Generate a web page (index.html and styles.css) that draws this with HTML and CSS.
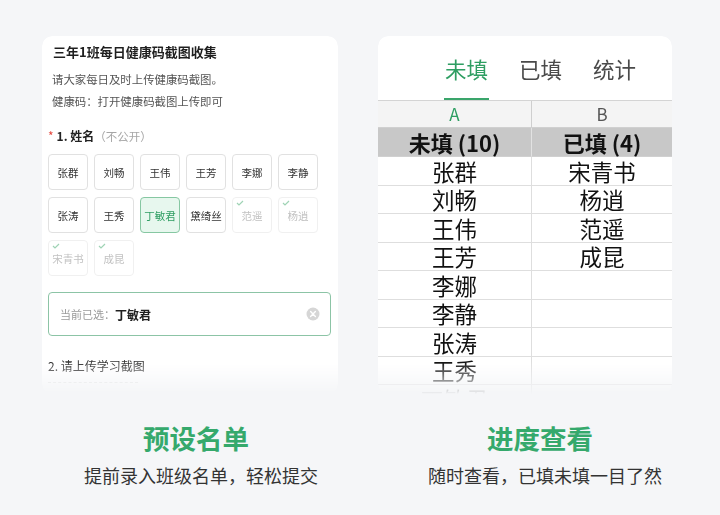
FILE: index.html
```html
<!DOCTYPE html>
<html lang="zh-CN">
<head>
<meta charset="utf-8">
<link rel="stylesheet" href="styles.css">
</head>
<body>
<div class="page">
  <div class="cards">
    <div class="card form-card">
      <div class="form-title">三年1班每日健康码截图收集</div>
      <div class="form-desc">请大家每日及时上传健康码截图。</div>
      <div class="form-desc">健康码：打开健康码截图上传即可</div>
      <div class="q-label"><span class="req">*</span><b>1. 姓名</b><span class="muted">（不公开）</span></div>
      <div class="chips">
        <div class="chip">张群</div>
        <div class="chip">刘畅</div>
        <div class="chip">王伟</div>
        <div class="chip">王芳</div>
        <div class="chip">李娜</div>
        <div class="chip">李静</div>
        <div class="chip">张涛</div>
        <div class="chip">王秀</div>
        <div class="chip selected">丁敏君</div>
        <div class="chip">黛绮丝</div>
        <div class="chip done"><svg class="tick" viewBox="0 0 8 6"><path d="M1 3 L3 5 L7 1" /></svg>范遥</div>
        <div class="chip done"><svg class="tick" viewBox="0 0 8 6"><path d="M1 3 L3 5 L7 1" /></svg>杨逍</div>
        <div class="chip done"><svg class="tick" viewBox="0 0 8 6"><path d="M1 3 L3 5 L7 1" /></svg>宋青书</div>
        <div class="chip done"><svg class="tick" viewBox="0 0 8 6"><path d="M1 3 L3 5 L7 1" /></svg>成昆</div>
      </div>
      <div class="picked">
        <span class="picked-label">当前已选：</span><span class="picked-name">丁敏君</span>
        <svg class="clear" viewBox="0 0 14 14"><circle cx="7" cy="7" r="6.5" /><path d="M4.6 4.6 L9.4 9.4 M9.4 4.6 L4.6 9.4" /></svg>
      </div>
      <div class="q2">2. 请上传学习截图</div>
      <div class="upload"></div>
    </div>

    <div class="card sheet-card">
      <div class="tabs">
        <div class="tab active">未填</div>
        <div class="tab">已填</div>
        <div class="tab">统计</div>
      </div>
      <div class="sheet">
        <div class="cell colhead green">A</div>
        <div class="cell colhead">B</div>
        <div class="cell head">未填 (10)</div>
        <div class="cell head">已填 (4)</div>
        <div class="cell">张群</div><div class="cell">宋青书</div>
        <div class="cell">刘畅</div><div class="cell">杨逍</div>
        <div class="cell">王伟</div><div class="cell">范遥</div>
        <div class="cell">王芳</div><div class="cell">成昆</div>
        <div class="cell">李娜</div><div class="cell"></div>
        <div class="cell">李静</div><div class="cell"></div>
        <div class="cell">张涛</div><div class="cell"></div>
        <div class="cell">王秀</div><div class="cell"></div>
        <div class="cell">丁敏君</div><div class="cell"></div>
      </div>
    </div>
  </div>

  <div class="captions">
    <div class="caption">
      <div class="cap-title">预设名单</div>
      <div class="cap-sub">提前录入班级名单，轻松提交</div>
    </div>
    <div class="caption">
      <div class="cap-title">进度查看</div>
      <div class="cap-sub">随时查看，已填未填一目了然</div>
    </div>
  </div>
</div>
</body>
</html>
```

FILE: styles.css
```css
* { box-sizing: border-box; }
html, body {
  margin: 0;
  padding: 0;
  width: 720px;
  height: 515px;
  overflow: hidden;
  background: #f5f6f8;
  font-family: "Noto Sans CJK SC", "Noto Sans", sans-serif;
  color: #333;
}
.page {
  padding-top: 36px;
}
.cards {
  display: flex;
  padding-left: 42px;
  gap: 40px;
}
.card {
  background: #fff;
  border-radius: 10px;
  height: 358px;
  overflow: hidden;
  -webkit-mask-image: linear-gradient(to bottom, #000 0, #000 326px, rgba(0,0,0,0) 358px);
  mask-image: linear-gradient(to bottom, #000 0, #000 326px, rgba(0,0,0,0) 358px);
}

/* ---------- left form card ---------- */
.form-card {
  width: 296px;
  padding: 6px 6px 0 6px;
}
.form-title {
  font-size: 13px;
  font-weight: 700;
  line-height: 20px;
  color: #1f1f1f;
  padding-left: 5px;
}
.form-desc {
  font-size: 11.4px;
  line-height: 22px;
  color: #555;
  padding-left: 4px;
}
.form-title + .form-desc { margin-top: 6px; }
.q-label {
  margin-top: 14px;
  font-size: 12px;
  line-height: 20px;
  color: #222;
  display: flex;
  align-items: center;
}
.q-label .req {
  color: #e5483f;
  font-size: 12px;
  margin-right: 3px;
}
.q-label b { font-weight: 700; }
.q-label .muted { color: #a6a6a6; font-size: 11.5px; }

.chips {
  margin-top: 8px;
  display: grid;
  grid-template-columns: repeat(6, 40px);
  grid-auto-rows: 36px;
  column-gap: 6px;
  row-gap: 7px;
}
.chip {
  position: relative;
  border: 1px solid #e1e1e1;
  border-radius: 4px;
  display: flex;
  align-items: center;
  justify-content: center;
  font-size: 10.5px;
  color: #333;
  white-space: nowrap;
}
.chip.selected {
  background: #e7f7ee;
  border-color: #86c7a2;
  color: #2f9e63;
}
.chip.done {
  border-color: #f0f0f0;
  color: #c2c2c2;
}
.tick {
  position: absolute;
  left: 3px;
  top: 2px;
  width: 8px;
  height: 6px;
  fill: none;
  stroke: #9fd3b5;
  stroke-width: 1.2;
}

.picked {
  margin-top: 16px;
  width: 283px;
  height: 44px;
  border: 1px solid #8cc4a6;
  border-radius: 4px;
  display: flex;
  align-items: center;
  padding: 0 10px 0 11px;
}
.picked-label {
  font-size: 11px;
  color: #9a9a9a;
}
.picked-name {
  font-size: 12px;
  font-weight: 700;
  color: #1f1f1f;
}
.clear {
  margin-left: auto;
  width: 14px;
  height: 14px;
}
.clear circle { fill: #d6d6d6; }
.clear path { stroke: #fff; stroke-width: 1.4; stroke-linecap: round; }
.q2 {
  margin-top: 20px;
  font-size: 12px;
  line-height: 20px;
  color: #333;
}
.upload {
  margin-top: 6px;
  width: 90px;
  border-top: 1px dashed #e4e4e4;
}

/* ---------- right sheet card ---------- */
.sheet-card {
  width: 294px;
}
.tabs {
  height: 64px;
  display: flex;
  padding-left: 66px;
  gap: 29px;
}
.tab {
  width: 45px;
  display: flex;
  align-items: center;
  justify-content: center;
  font-size: 21.5px;
  color: #4a4a4a;
  border-bottom: 2px solid transparent;
  padding-top: 2px;
}
.tab.active {
  color: #2e9e62;
  border-bottom-color: #3aa56b;
}
.sheet {
  display: grid;
  grid-template-columns: 154px 140px;
  grid-template-rows: 27px 29px;
  grid-auto-rows: 28.5px;
  border-top: 1px solid #d4d4d4;
}
.cell {
  border-bottom: 1px solid #dedede;
  border-right: 1px solid #dedede;
  display: flex;
  align-items: center;
  justify-content: center;
  font-size: 22.5px;
  color: #111;
  line-height: 26px;
}
.cell:nth-child(2n) { border-right: none; }
.cell.colhead {
  background: #f4f4f4;
  font-size: 17px;
  line-height: 22px;
  color: #555;
  border-bottom-color: #d0d0d0;
  border-right-color: #cfcfcf;
}
.cell.colhead.green { color: #2e9e62; }
.cell.head {
  background: #c8c8c8;
  font-weight: 700;
  font-size: 22px;
  color: #111;
  border-right-color: #e2e2e2;
  border-bottom-color: #d0d0d0;
}

/* ---------- captions ---------- */
.captions {
  display: flex;
  padding-left: 24px;
  margin-top: 26px;
}
.caption {
  width: 344px;
  text-align: center;
}
.cap-title {
  font-size: 26.5px;
  font-weight: 700;
  line-height: 36px;
  color: #35a96c;
}
.cap-sub {
  margin-top: 7px;
  font-size: 18px;
  line-height: 24px;
  font-weight: 400;
  color: #333;
  padding-left: 10px;
}
```
